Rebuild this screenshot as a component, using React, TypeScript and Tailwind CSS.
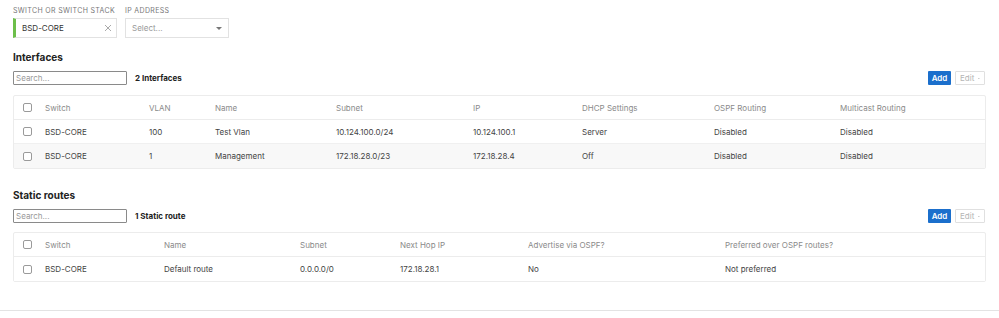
import React from "react";

const font = { fontFamily: "Inter, 'Noto Sans', sans-serif" };

function Checkbox() {
  return <div className="w-[9px] h-[9px] border border-[#9a9a9a] rounded-[2px] bg-white" />;
}

function Toolbar({ label }: { label: string }) {
  return (
    <div className="flex items-center h-[14px]">
      <div className="w-[114px] h-[14px] border border-[#8a8a8a] rounded-[1px] flex items-center px-[2px] text-[8px] text-[#999]">
        Search...
      </div>
      <div className="ml-[8px] text-[8px] font-bold text-[#222] whitespace-nowrap">{label}</div>
      <div className="ml-auto flex items-center gap-[4px] mr-[14px]">
        <div className="h-[14px] w-[23px] justify-center bg-[#1b6fcc] text-white text-[8px] font-semibold flex items-center rounded-[1px]">Add</div>
        <div className="h-[14px] w-[30px] pl-[4px] pr-[4px] border border-[#e0e0e0] text-[#b5b5b5] text-[8px] flex items-center gap-[4px] rounded-[1px] whitespace-nowrap">
          <span>Edit</span>
          <svg width="5" height="3" viewBox="0 0 5 3"><path d="M0 0h5L2.5 3z" fill="#aaa" /></svg>
        </div>
      </div>
    </div>
  );
}

function Table({ cols, headers, rows }: { cols: string; headers: string[]; rows: string[][] }) {
  return (
    <div className="mr-[13px] border border-[#ececec] rounded-[2px] text-[8px]">
      <div className={`grid ${cols} h-[24px] items-center pl-[9px] border-b border-[#ececec] text-[#8a8a8a]`}>
        <Checkbox />
        {headers.map((h) => (
          <div key={h} className="whitespace-nowrap">{h}</div>
        ))}
      </div>
      {rows.map((r, i) => (
        <div
          key={i}
          className={`grid ${cols} h-[24px] items-center pl-[9px] text-[#444] ${i % 2 === 1 ? "bg-[#f8f8f8]" : "bg-white"} ${i < rows.length - 1 ? "border-b border-[#f0f0f0]" : ""}`}
        >
          <Checkbox />
          {r.map((c, j) => (
            <div key={j} className="whitespace-nowrap">{c}</div>
          ))}
        </div>
      ))}
    </div>
  );
}

export default function App() {
  return (
    <div style={font} className="w-[999px] h-[318px] bg-white relative">
      <div className="pl-[13px] pt-[7px]">
        <div className="flex gap-[8px] text-[7px] tracking-[0.05em] text-[#777] h-[8px] items-center whitespace-nowrap">
          <div className="w-[104px]">SWITCH OR SWITCH STACK</div>
          <div>IP ADDRESS</div>
        </div>
        <div className="flex gap-[8px] mt-[3px]">
          <div className="w-[104px] h-[20px] border border-[#e2e2e2] border-l-[3px] border-l-[#6dbf4a] flex items-center pl-[6px] pr-[4px] text-[8px] text-[#333]">
            <span>BSD-CORE</span>
            <svg className="ml-auto" width="8" height="8" viewBox="0 0 8 8">
              <path d="M1 1L7 7M7 1L1 7" stroke="#aaa" strokeWidth="1" />
            </svg>
          </div>
          <div className="w-[104px] h-[20px] border border-[#e2e2e2] flex items-center pl-[6px] pr-[6px] text-[8px] text-[#999]">
            <span>Select...</span>
            <svg className="ml-auto" width="6" height="3" viewBox="0 0 6 3"><path d="M0 0h6L3 3z" fill="#777" /></svg>
          </div>
        </div>

        <div className="mt-[13px] text-[10px] font-bold text-[#222] h-[12px] leading-[12px]">Interfaces</div>
        <div className="mt-[8px]">
          <Toolbar label="2 Interfaces" />
        </div>
        <div className="mt-[10px]">
          <Table
            cols="grid-cols-[22px_104px_66px_121px_137px_109px_132px_126px_1fr]"
            headers={["Switch", "VLAN", "Name", "Subnet", "IP", "DHCP Settings", "OSPF Routing", "Multicast Routing"]}
            rows={[
              ["BSD-CORE", "100", "Test Vlan", "10.124.100.0/24", "10.124.100.1", "Server", "Disabled", "Disabled"],
              ["BSD-CORE", "1", "Management", "172.18.28.0/23", "172.18.28.4", "Off", "Disabled", "Disabled"],
            ]}
          />
        </div>

        <div className="mt-[20px] text-[10px] font-bold text-[#222] h-[12px] leading-[12px]">Static routes</div>
        <div className="mt-[8px]">
          <Toolbar label="1 Static route" />
        </div>
        <div className="mt-[9px]">
          <Table
            cols="grid-cols-[22px_119px_136px_100px_128px_197px_1fr]"
            headers={["Switch", "Name", "Subnet", "Next Hop IP", "Advertise via OSPF?", "Preferred over OSPF routes?"]}
            rows={[["BSD-CORE", "Default route", "0.0.0.0/0", "172.18.28.1", "No", "Not preferred"]]}
          />
        </div>
      </div>
      <div className="absolute left-0 right-0 top-[310px] h-[1px] bg-[#e3e3e3]" />
    </div>
  );
}
